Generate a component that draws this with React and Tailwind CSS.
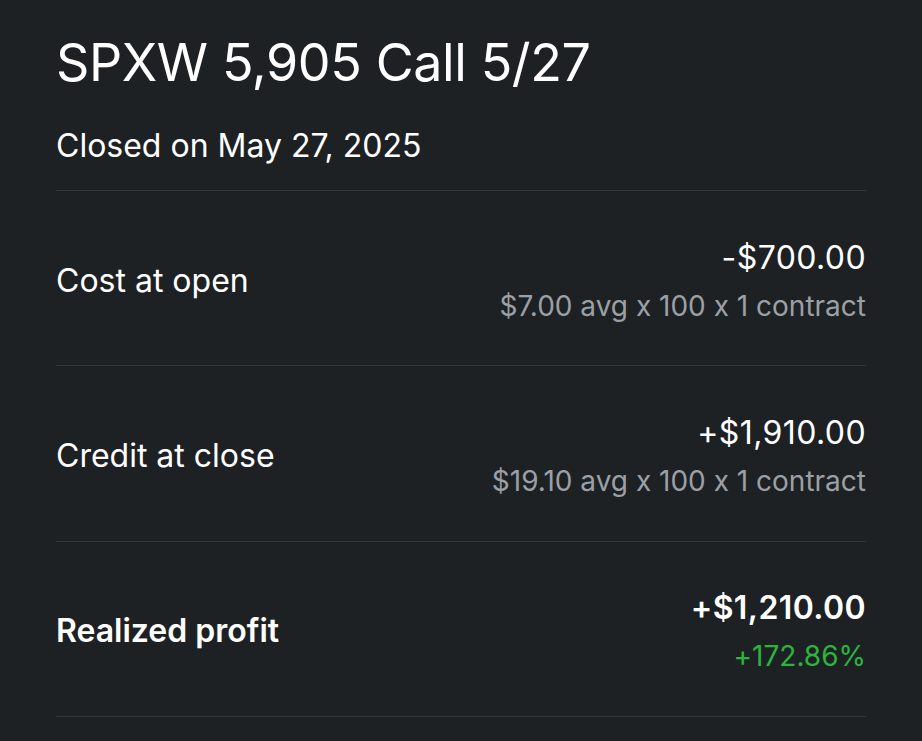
const rows = [
  {
    label: "Cost at open",
    value: "-$700.00",
    sub: "$7.00 avg x 100 x 1 contract",
  },
  {
    label: "Credit at close",
    value: "+$1,910.00",
    sub: "$19.10 avg x 100 x 1 contract",
  },
  {
    label: "Realized profit",
    value: "+$1,210.00",
    sub: "+172.86%",
    bold: true,
  },
];

const App = () => {
  return (
    <div
      className="min-h-[741px] w-full bg-[#1e2124] text-white pl-[56px] pr-[56px] [font-feature-settings:'calt'_0]"
      style={{ fontFamily: "Inter, 'Liberation Sans', sans-serif" }}
    >
      <h1 className="pt-[31px] text-[52px] leading-[64px] font-normal tracking-[-0.4px]">
        SPXW 5,905 Call 5/27
      </h1>
      <p className="mt-[31px] text-[32px] leading-[40px] pb-[24px] border-b border-[#33373b]">
        Closed on May 27, 2025
      </p>
      {rows.map((r) => (
        <div
          key={r.label}
          className="flex items-center justify-between h-[175.3px] pt-[5px] border-b border-[#33373b]"
        >
          <span className={`text-[32px] ${r.bold ? "font-semibold" : "font-normal"}`}>
            {r.label}
          </span>
          <div className="flex flex-col items-end gap-[10px]">
            <span
              className={`text-[32px] leading-[40px] tracking-[0.4px] ${r.bold ? "font-semibold" : "font-normal"}`}
            >
              {r.value}
            </span>
            <span
              className={`text-[28px] leading-[36px] ${r.bold ? "text-[#2bb53d]" : "text-[#9aa0a6]"}`}
            >
              {r.sub}
            </span>
          </div>
        </div>
      ))}
    </div>
  );
};

export default App;
